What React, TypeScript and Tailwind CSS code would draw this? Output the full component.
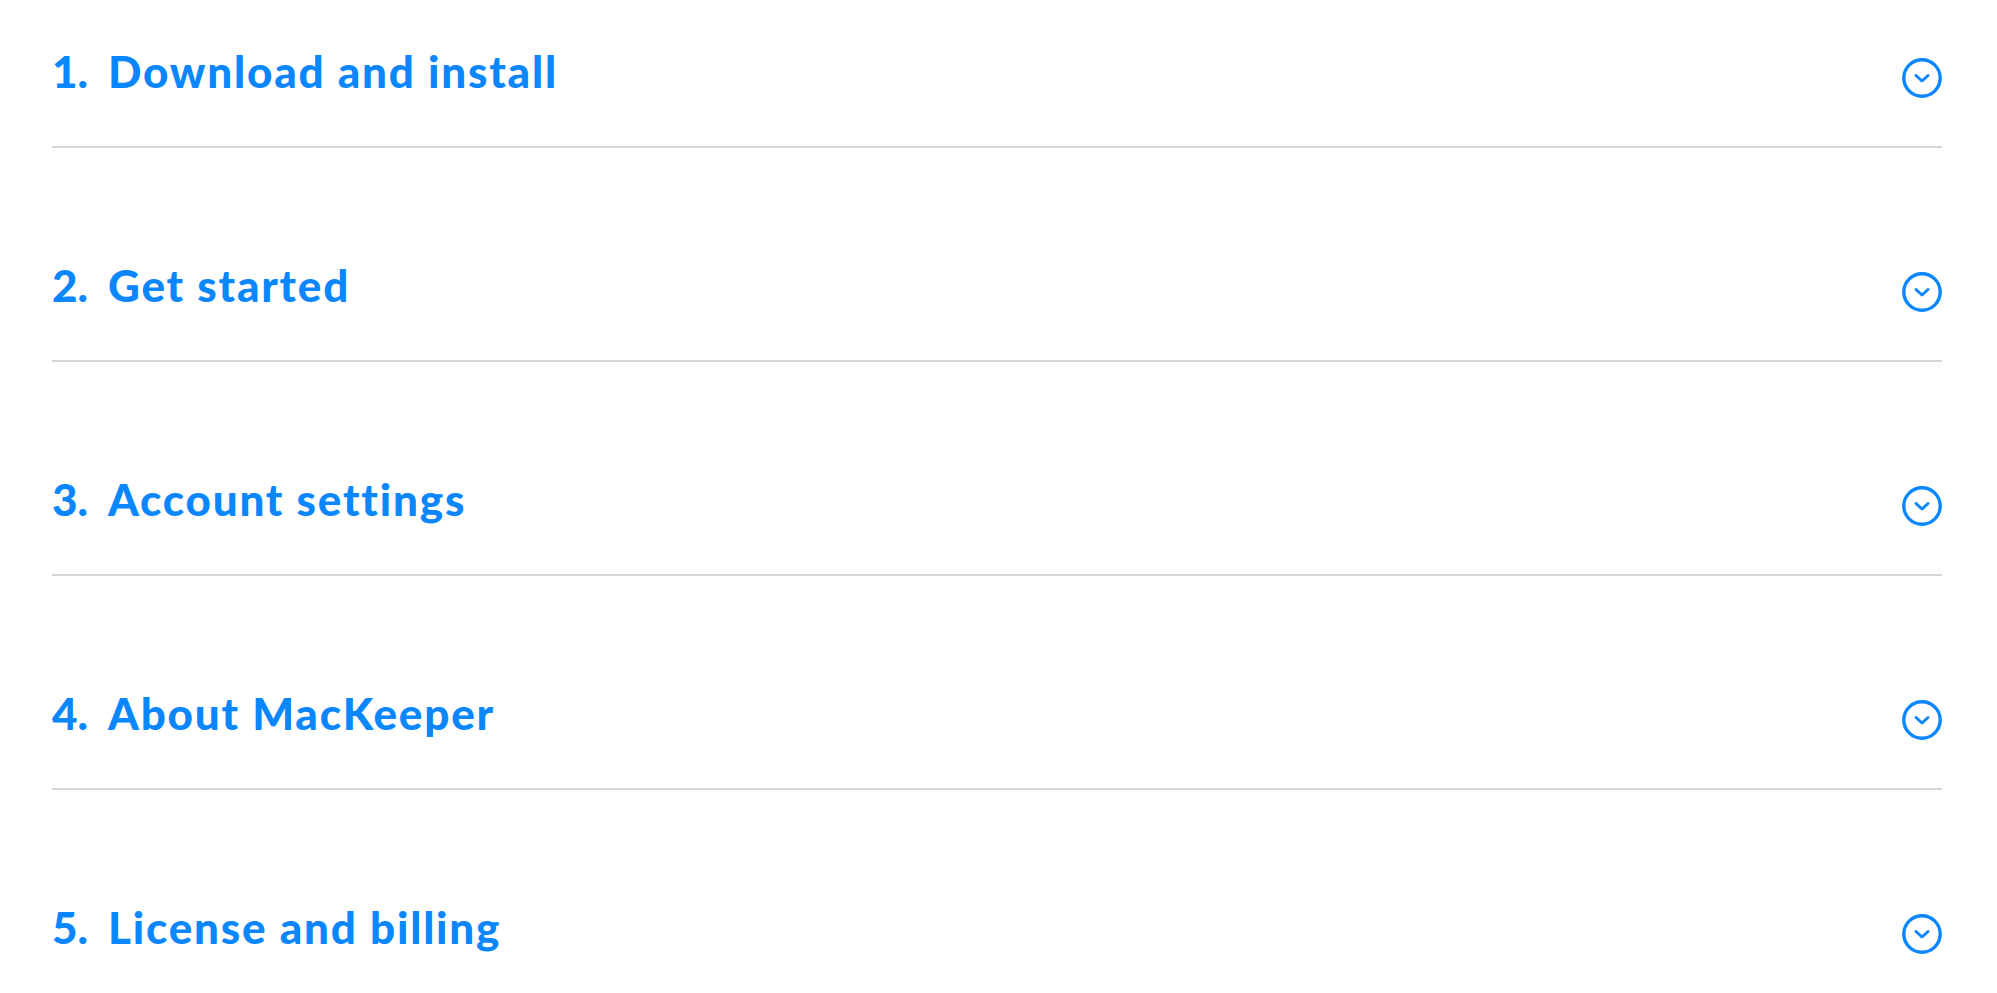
import React from "react";

const items = [
  "Download and install",
  "Get started",
  "Account settings",
  "About MacKeeper",
  "License and billing",
];

function ChevronCircle() {
  return (
    <svg width="40" height="40" viewBox="0 0 40 40" fill="none" aria-hidden="true">
      <circle cx="20" cy="20" r="18.2" stroke="#0a86ff" strokeWidth="3.4" />
      <polyline
        points="14,17.5 20,23 26,17.5"
        stroke="#0a86ff"
        strokeWidth="3"
        strokeLinecap="round"
        strokeLinejoin="round"
      />
    </svg>
  );
}

export default function App() {
  return (
    <div className="min-h-screen bg-white pl-[52px] pr-[55px]" style={{ fontFamily: "Lato, 'Noto Sans', sans-serif" }}>
      {items.map((title, i) => (
        <div
          key={title}
          className={`flex items-start justify-between border-b-2 border-[#d6d6d6] pb-[53px] ${i === 0 ? "pt-[49px]" : "pt-[115px]"}`}
        >
          <div className="flex text-[44px] leading-[44px] font-black tracking-[1.8px] text-[#0a86ff]">
            <span className="w-[56px] tracking-normal">{i + 1}.</span>
            <span>{title}</span>
          </div>
          <div className="mt-[9px] -mb-[5px]">
            <ChevronCircle />
          </div>
        </div>
      ))}
    </div>
  );
}
